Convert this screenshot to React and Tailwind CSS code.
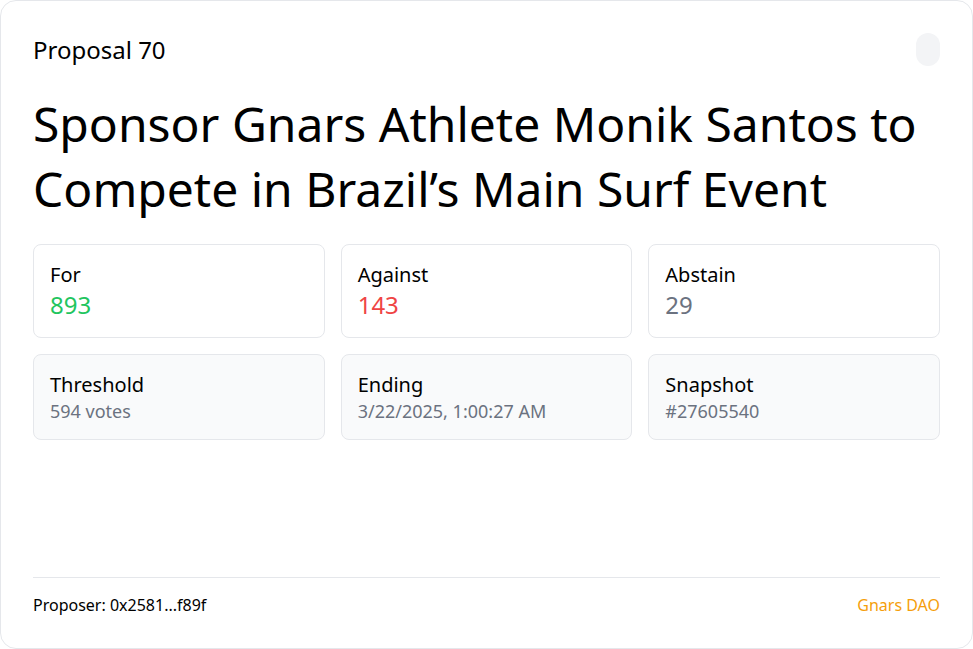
import React from 'react';

const votes = [
  { label: 'For', value: '893', color: 'text-[#22c55e]' },
  { label: 'Against', value: '143', color: 'text-[#ef4444]' },
  { label: 'Abstain', value: '29', color: 'text-[#6b7280]' },
];

const meta = [
  { label: 'Threshold', value: '594 votes' },
  { label: 'Ending', value: '3/22/2025, 1:00:27 AM' },
  { label: 'Snapshot', value: '#27605540' },
];

export default function App() {
  return (
    <div className="h-[649px] w-[973px] bg-white" style={{ fontFamily: '"Noto Sans", "Open Sans", sans-serif' }}>
      <div className="flex h-[649px] flex-col rounded-2xl border border-[#e5e7eb] bg-white p-8 text-black">
        {/* header */}
        <div className="flex h-[33px] items-center justify-between">
          <span className="text-2xl leading-[33px]">Proposal 70</span>
          <div className="h-[33px] w-6 rounded-full bg-[#f3f4f6]"></div>
        </div>

        <h1 className="mt-[25px] text-[48px] leading-[65px] font-normal">
          Sponsor Gnars Athlete Monik Santos to Compete in Brazil’s Main Surf Event
        </h1>

        {/* votes */}
        <div className="mt-[23px] grid grid-cols-3 gap-4">
          {votes.map((v) => (
            <div key={v.label} className="rounded-lg border border-[#e5e7eb] bg-white p-4">
              <div className="text-xl leading-7">{v.label}</div>
              <div className={`text-2xl leading-8 ${v.color}`}>{v.value}</div>
            </div>
          ))}
        </div>

        <div className="mt-4 grid grid-cols-3 gap-4">
          {meta.map((m) => (
            <div key={m.label} className="rounded-lg border border-[#e5e7eb] bg-[#f9fafb] p-4">
              <div className="text-xl leading-7">{m.label}</div>
              <div className="text-lg leading-6 text-[#6b7280]">{m.value}</div>
            </div>
          ))}
        </div>

        {/* footer */}
        <div className="mt-auto flex items-center justify-between border-t border-[#e5e7eb] pt-4 text-base leading-[22px]">
          <span>Proposer: 0x2581...f89f</span>
          <span className="text-[#f59e0b]">Gnars DAO</span>
        </div>
      </div>
    </div>
  );
}
